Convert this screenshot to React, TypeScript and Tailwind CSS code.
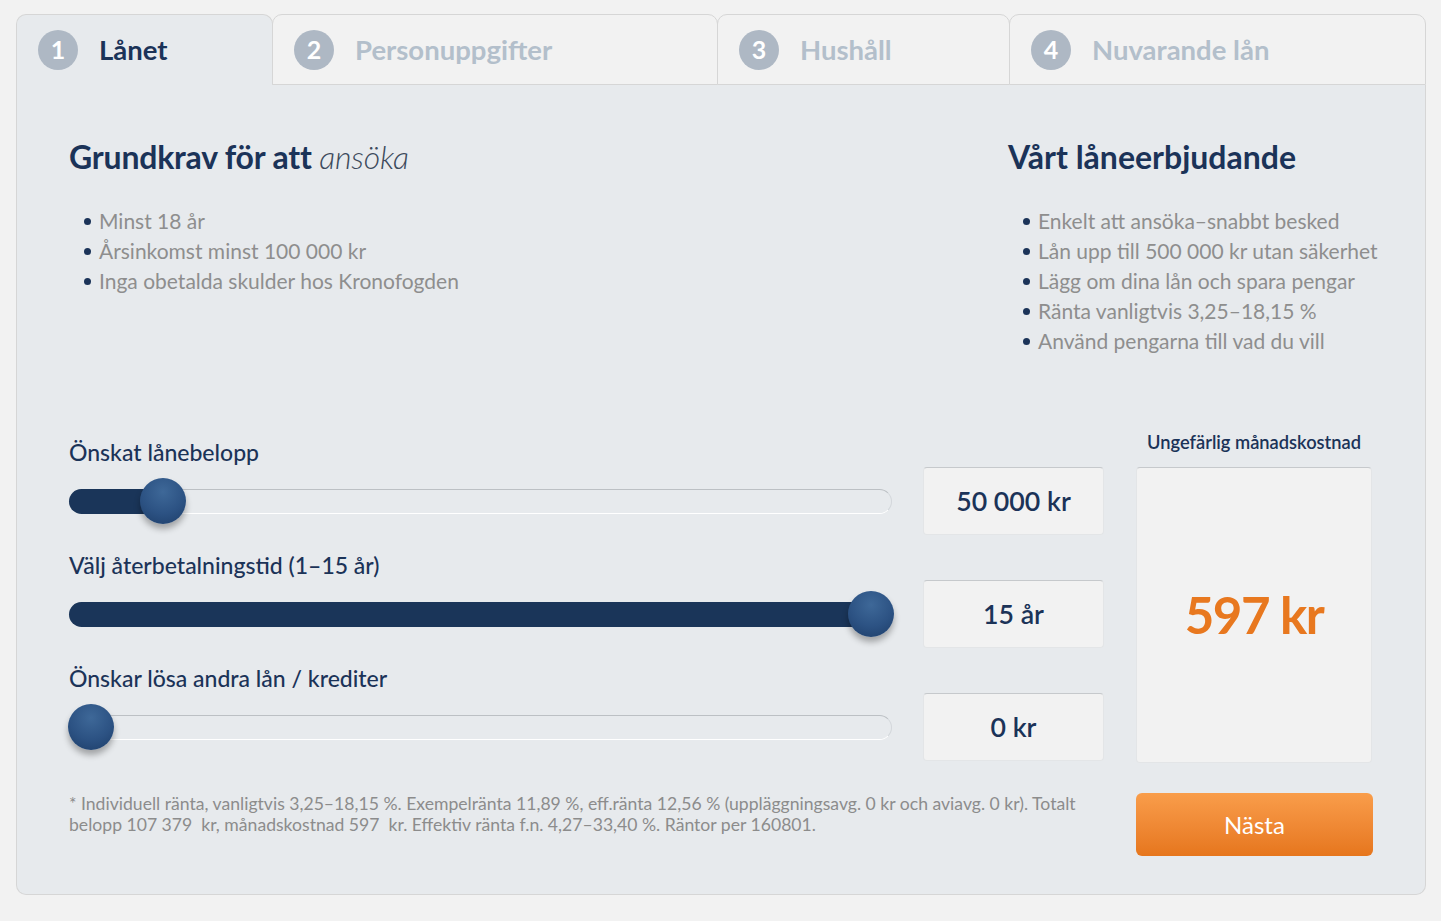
const tabs = [
  { n: 1, label: 'Lånet', w: 'w-[257px]', active: true },
  { n: 2, label: 'Personuppgifter', w: 'w-[446px]', active: false },
  { n: 3, label: 'Hushåll', w: 'w-[293px]', active: false },
  { n: 4, label: 'Nuvarande lån', w: 'w-[417px]', active: false },
];

const requirements = ['Minst 18 år', 'Årsinkomst minst 100 000 kr', 'Inga obetalda skulder hos Kronofogden'];

const offers = [
  'Enkelt att ansöka–snabbt besked',
  'Lån upp till 500 000 kr utan säkerhet',
  'Lägg om dina lån och spara pengar',
  'Ränta vanligtvis 3,25–18,15 %',
  'Använd pengarna till vad du vill',
];

const sliders = [
  { label: 'Önskat lånebelopp', value: '50 000 kr', frac: 0.0923 },
  { label: 'Välj återbetalningstid (1–15 år)', value: '15 år', frac: 1 },
  { label: 'Önskar lösa andra lån / krediter', value: '0 kr', frac: 0 },
];

function BulletList({ items }: { items: string[] }) {
  return (
    <ul className="mt-[29px] pl-[15px]">
      {items.map((t) => (
        <li key={t} className="flex items-center gap-[8px] whitespace-nowrap text-[21px] leading-[30px] text-[#8e8e8e]">
          <span className="w-[7px] h-[7px] rounded-full bg-[#1b3358] shrink-0" />
          {t}
        </li>
      ))}
    </ul>
  );
}

function Slider({ frac }: { frac: number }) {
  // handle centre runs from 22px to 802px along the 823px track
  const center = 22 + frac * 780;
  return (
    <div className="relative h-[68px] flex items-center">
      <div className="relative w-full h-[25px] rounded-full border border-[#d3d7db] border-t-[#bcc0c4] border-b-white bg-[#e7eaed]">
        {frac > 0 && (
          <div
            className="absolute -left-px -top-px h-[25px] rounded-l-full bg-[#1a3559]"
            style={{ width: center }}
          />
        )}
      </div>
      <div
        className="absolute top-[11px] w-[46px] h-[46px] rounded-full bg-[radial-gradient(circle_at_50%_30%,#3e6898_0%,#2c5283_55%,#1d3d68_100%)] shadow-[0_5px_6px_rgba(0,0,0,0.3)]"
        style={{ left: center - 23 }}
      />
    </div>
  );
}

export default function App() {
  return (
    <div className="min-h-screen bg-[#f2f2f2] pt-[14px] px-[16px] font-['Lato',sans-serif]">
      <div className="w-[1410px]">
        <div className="flex h-[71px]">
          {tabs.map((t, i) => (
            <div
              key={t.n}
              className={`${t.w} ${i > 0 ? '-ml-px' : ''} flex items-center pl-[21px] gap-[21px] rounded-t-[10px] border-t border-x border-[#d6d6d6] ${
                t.active ? 'bg-[#e7eaed]' : 'bg-[#f2f2f2] border-b'
              }`}
            >
              <span className="w-[40px] h-[40px] rounded-full bg-[#aeb8c4] flex items-center justify-center text-white text-[25px] font-bold">
                {t.n}
              </span>
              <span className={`text-[27.5px] font-bold ${t.active ? 'text-[#1b3358]' : 'text-[#b3bfcb]'}`}>{t.label}</span>
            </div>
          ))}
        </div>

        <div className="bg-[#e7eaed] border-x border-b border-[#d6d6d6] rounded-b-[10px] pt-[52px] px-[52px] pb-[38px]">
          <div className="flex justify-between">
            <div>
              <h2 className="text-[32px] leading-[40px] font-bold text-[#1b3358] tracking-[-0.2px]">
                Grundkrav för att <span className="italic font-light text-[#3d4a5c]">ansöka</span>
              </h2>
              <BulletList items={requirements} />
            </div>
            <div className="w-[365px]">
              <h2 className="text-[32px] leading-[40px] font-bold text-[#1b3358]">Vårt låneerbjudande</h2>
              <BulletList items={offers} />
            </div>
          </div>

          <div className="mt-[74px] flex">
            <div className="w-[1035px] pt-[7px] flex flex-col gap-[15px]">
              {sliders.map((s) => (
                <div key={s.label} className="flex items-end">
                  <div className="w-[823px]">
                    <p className="text-[23px] leading-[30px] font-medium text-[#1b3358]">{s.label}</p>
                    <Slider frac={s.frac} />
                  </div>
                  <div className="ml-[31px] w-[181px] h-[68px] rounded-[4px] bg-[#f2f2f2] border border-[#e3e5e7] border-t-[#c6c9cc] flex items-center justify-center text-[26.7px] font-semibold text-[#1b3358]">
                    {s.value}
                  </div>
                </div>
              ))}
            </div>
            <div className="ml-[32px] w-[236px]">
              <p className="text-[18.3px] leading-[24px] font-semibold text-[#1b3358] text-center">Ungefärlig månadskostnad</p>
              <div className="mt-[13px] h-[296px] rounded-[4px] bg-[#f2f2f2] border border-[#e3e5e7] border-t-[#c6c9cc] flex items-center justify-center text-[51px] font-bold text-[#e8781f] tracking-[-1.5px]">
                597 kr
              </div>
            </div>
          </div>

          <div className="mt-[30px] flex items-start">
            <p className="w-[1040px] text-[17.6px] leading-[21px] text-[#8c8c8c]">
              * Individuell ränta, vanligtvis 3,25–18,15 %. Exempelränta 11,89 %, eff.ränta 12,56 % (uppläggningsavg. 0 kr och aviavg. 0 kr). Totalt belopp 107 379&nbsp; kr, månadskostnad 597&nbsp; kr. Effektiv ränta f.n. 4,27–33,40 %. Räntor per 160801.
            </p>
            <button className="ml-auto w-[237px] h-[63px] rounded-[6px] bg-gradient-to-b from-[#f99d4a] to-[#e6761c] text-white text-[24px]">
              Nästa
            </button>
          </div>
        </div>
      </div>
    </div>
  );
}
